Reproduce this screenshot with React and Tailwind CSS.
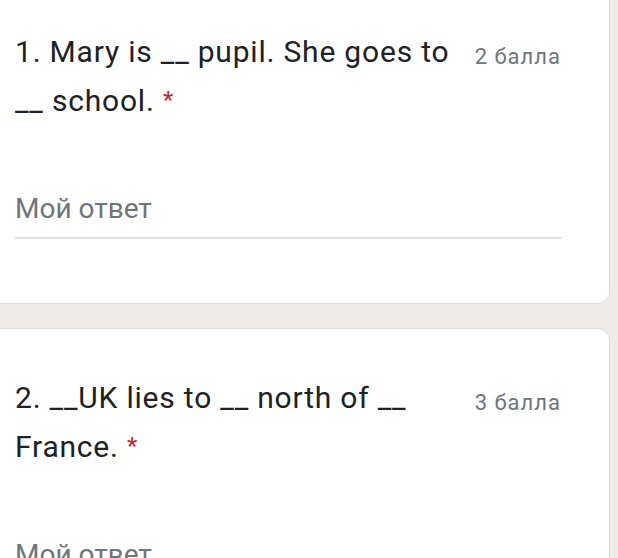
const questions = [
  { id: 1, text: "1. Mary is __ pupil. She goes to __ school.", points: "2 балла" },
  { id: 2, text: "2. __UK lies to __ north of __ France.", points: "3 балла" },
];

const QuestionCard = ({ q }) => {
  return (
    <div className="bg-white border border-[#dadce0] rounded-[12px] pl-[30px] pr-[48px] pt-[45px] pb-[64px]">
      <div className="flex items-start">
        <div className="flex-1 text-[30px] leading-[48px] tracking-[0.8px] text-[#202124] pr-[22px]">
          {q.text} <span className="align-[3px] text-[24px] text-[#c5221f]">*</span>
        </div>
        <div className="pt-[5px] text-[22px] leading-[48px] tracking-[1px] text-[#70757a] whitespace-nowrap">
          {q.points}
        </div>
      </div>
      <div className="mt-[66px] border-b-2 border-[#e0e0e0] pb-[10px]">
        <div className="text-[28px] leading-[36px] text-[#70757a]">Мой ответ</div>
      </div>
    </div>
  );
};

export default function App() {
  return (
    <div
      className="h-[558px] w-[618px] overflow-hidden bg-[#f0ebe8]"
      style={{ fontFamily: "Roboto, 'Noto Sans', sans-serif" }}
    >
      <div className="-mt-[18px] -ml-[16px] mr-[8px] flex flex-col gap-[24px]">
        {questions.map((q) => (
          <QuestionCard key={q.id} q={q} />
        ))}
      </div>
    </div>
  );
}
